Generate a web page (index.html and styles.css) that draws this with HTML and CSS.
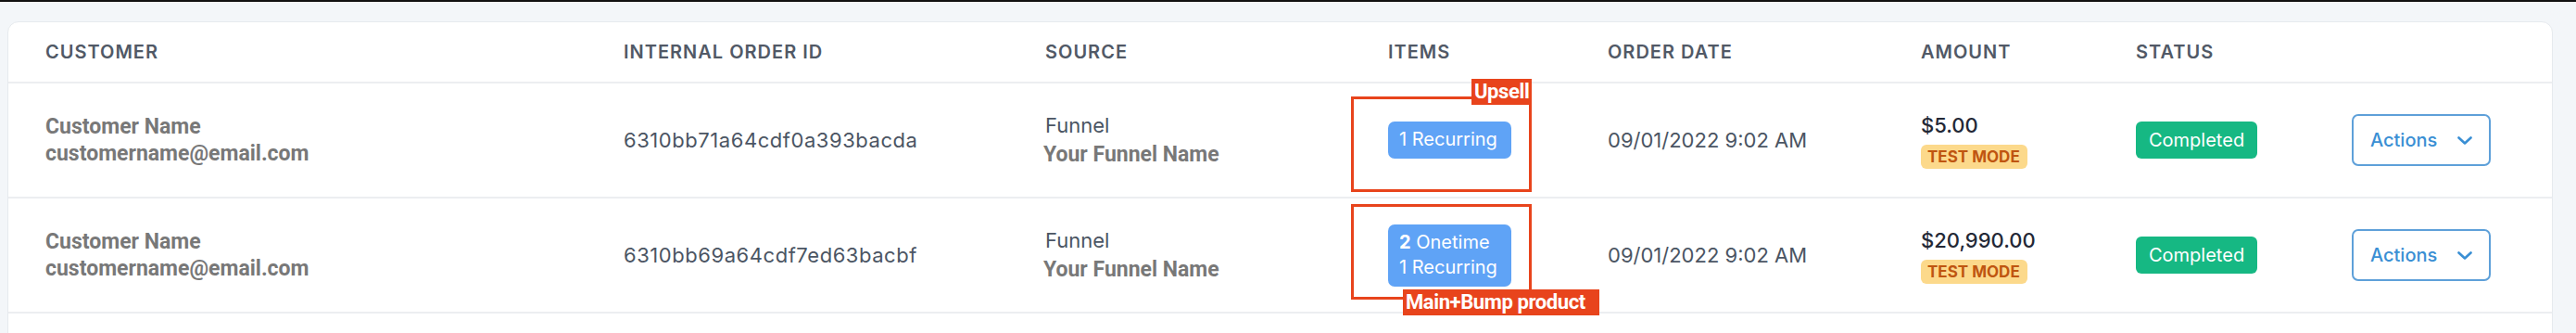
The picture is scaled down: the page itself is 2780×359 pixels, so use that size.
FILE: index.html
```html
<!DOCTYPE html>
<html lang="en">
<head>
<meta charset="utf-8">
<title>Orders</title>
<link rel="stylesheet" href="styles.css">
</head>
<body>
<div class="page">
  <div class="card">
    <div class="row head">
      <div class="cell">Customer</div>
      <div class="cell">Internal Order ID</div>
      <div class="cell">Source</div>
      <div class="cell">Items</div>
      <div class="cell">Order Date</div>
      <div class="cell">Amount</div>
      <div class="cell">Status</div>
      <div class="cell"></div>
    </div>

    <div class="row">
      <div class="cell customer">
        <span class="name">Customer Name</span>
        <span class="email">customername@email.com</span>
      </div>
      <div class="cell order-id">6310bb71a64cdf0a393bacda</div>
      <div class="cell source">
        <span class="src-type">Funnel</span>
        <span class="src-name">Your Funnel Name</span>
      </div>
      <div class="cell items">
        <span class="items-badge"><span class="line">1 Recurring</span></span>
        <div class="note note-upsell"></div>
        <span class="note-label label-upsell">Upsell</span>
      </div>
      <div class="cell plain">09/01/2022 9:02 AM</div>
      <div class="cell amount">
        <span class="price">$5.00</span>
        <span class="test-badge">TEST MODE</span>
      </div>
      <div class="cell">
        <span class="status">Completed</span>
      </div>
      <div class="cell">
        <button class="actions" type="button">
          <span>Actions</span>
          <svg class="chev" width="16" height="9" viewBox="0 0 16 9"><polyline points="1.5,1.5 8,7.5 14.5,1.5" fill="none" stroke="currentColor" stroke-width="2.6" stroke-linecap="round" stroke-linejoin="round"/></svg>
        </button>
      </div>
    </div>

    <div class="row">
      <div class="cell customer">
        <span class="name">Customer Name</span>
        <span class="email">customername@email.com</span>
      </div>
      <div class="cell order-id">6310bb69a64cdf7ed63bacbf</div>
      <div class="cell source">
        <span class="src-type">Funnel</span>
        <span class="src-name">Your Funnel Name</span>
      </div>
      <div class="cell items">
        <span class="items-badge">
          <span class="line"><b>2</b> Onetime</span>
          <span class="line">1 Recurring</span>
        </span>
        <div class="note note-bump"></div>
        <span class="note-label label-bump">Main+Bump product</span>
      </div>
      <div class="cell plain">09/01/2022 9:02 AM</div>
      <div class="cell amount">
        <span class="price">$20,990.00</span>
        <span class="test-badge">TEST MODE</span>
      </div>
      <div class="cell">
        <span class="status">Completed</span>
      </div>
      <div class="cell">
        <button class="actions" type="button">
          <span>Actions</span>
          <svg class="chev" width="16" height="9" viewBox="0 0 16 9"><polyline points="1.5,1.5 8,7.5 14.5,1.5" fill="none" stroke="currentColor" stroke-width="2.6" stroke-linecap="round" stroke-linejoin="round"/></svg>
        </button>
      </div>
    </div>
  </div>
</div>
</body>
</html>
```

FILE: styles.css
```css
html, body {
  margin: 0;
  padding: 0;
}

body {
  background: #f3f6f9;
  border-top: 2px solid #111;
  font-family: Inter, "Noto Sans", sans-serif;
  overflow: hidden;
}

.page {
  padding: 21px 25px 0 8px;
}

.card {
  background: #ffffff;
  border: 1px solid #e6eaee;
  border-radius: 12px;
  padding-bottom: 80px;
}

.row {
  display: grid;
  grid-template-columns: 624px 455px 370px 237px 338px 232px 233px 1fr;
  padding-left: 40px;
  height: 122px;
  border-bottom: 2px solid #eceef1;
}

.row.head {
  height: 64px;
}

.cell {
  display: flex;
  flex-direction: column;
  justify-content: center;
  align-items: flex-start;
  color: #4b5563;
  font-size: 22px;
}

.head .cell {
  font-size: 20px;
  font-weight: 600;
  letter-spacing: 1px;
  text-transform: uppercase;
  color: #515966;
}

.order-id {
  letter-spacing: 0.55px;
}

.customer,
.src-name {
  font-family: Roboto, "Liberation Sans", sans-serif;
  font-weight: 700;
  color: #787878;
}

.customer {
  font-size: 23px;
  line-height: 29px;
}

.source {
  line-height: 32px;
}

.src-type {
  color: #4b5563;
}

.src-name {
  font-size: 23px;
  margin-left: -2px;
}

.items {
  position: relative;
}

.items-badge {
  display: flex;
  flex-direction: column;
  background: #5fa3f6;
  color: #ffffff;
  border-radius: 7px;
  padding: 6px 15px 7px 12px;
  font-size: 20px;
  line-height: 27px;
}

.items-badge b {
  font-weight: 700;
}

.note {
  position: absolute;
  left: -40px;
  width: 195px;
  border: 3px solid #e8441c;
  box-sizing: border-box;
}

.note-upsell {
  top: 14px;
  height: 103px;
}

.note-bump {
  top: 6px;
  height: 103px;
}

.note-label {
  position: absolute;
  background: #e8441c;
  color: #ffffff;
  font-family: Roboto, "Liberation Sans", sans-serif;
  font-weight: 700;
  font-size: 22px;
  line-height: 28px;
  height: 28px;
  letter-spacing: -0.4px;
  white-space: nowrap;
  box-sizing: border-box;
  padding: 0 2px 0 3px;
}

.label-upsell {
  left: 90px;
  top: -5px;
  width: 65px;
}

.label-bump {
  left: 16px;
  top: 98px;
  width: 212px;
}

.amount .price {
  font-weight: 500;
  color: #232836;
  line-height: 28px;
}

.test-badge {
  margin-top: 7px;
  background: #fcd98b;
  color: #bf5510;
  font-weight: 700;
  font-size: 17px;
  line-height: 26px;
  height: 26px;
  padding: 0 8px 0 7px;
  border-radius: 6px;
}

.status {
  background: #16b883;
  color: #ffffff;
  font-size: 20px;
  height: 40px;
  line-height: 40px;
  padding: 0 14px;
  border-radius: 6px;
}

.actions {
  display: flex;
  align-items: center;
  justify-content: space-between;
  width: 150px;
  height: 56px;
  box-sizing: border-box;
  padding: 0 18px;
  background: #ffffff;
  border: 2px solid #5ea0d9;
  border-radius: 7px;
  color: #3a8fd4;
  font-family: Inter, "Noto Sans", sans-serif;
  font-size: 20px;
  font-weight: 500;
}

.chev {
  display: block;
}
```
